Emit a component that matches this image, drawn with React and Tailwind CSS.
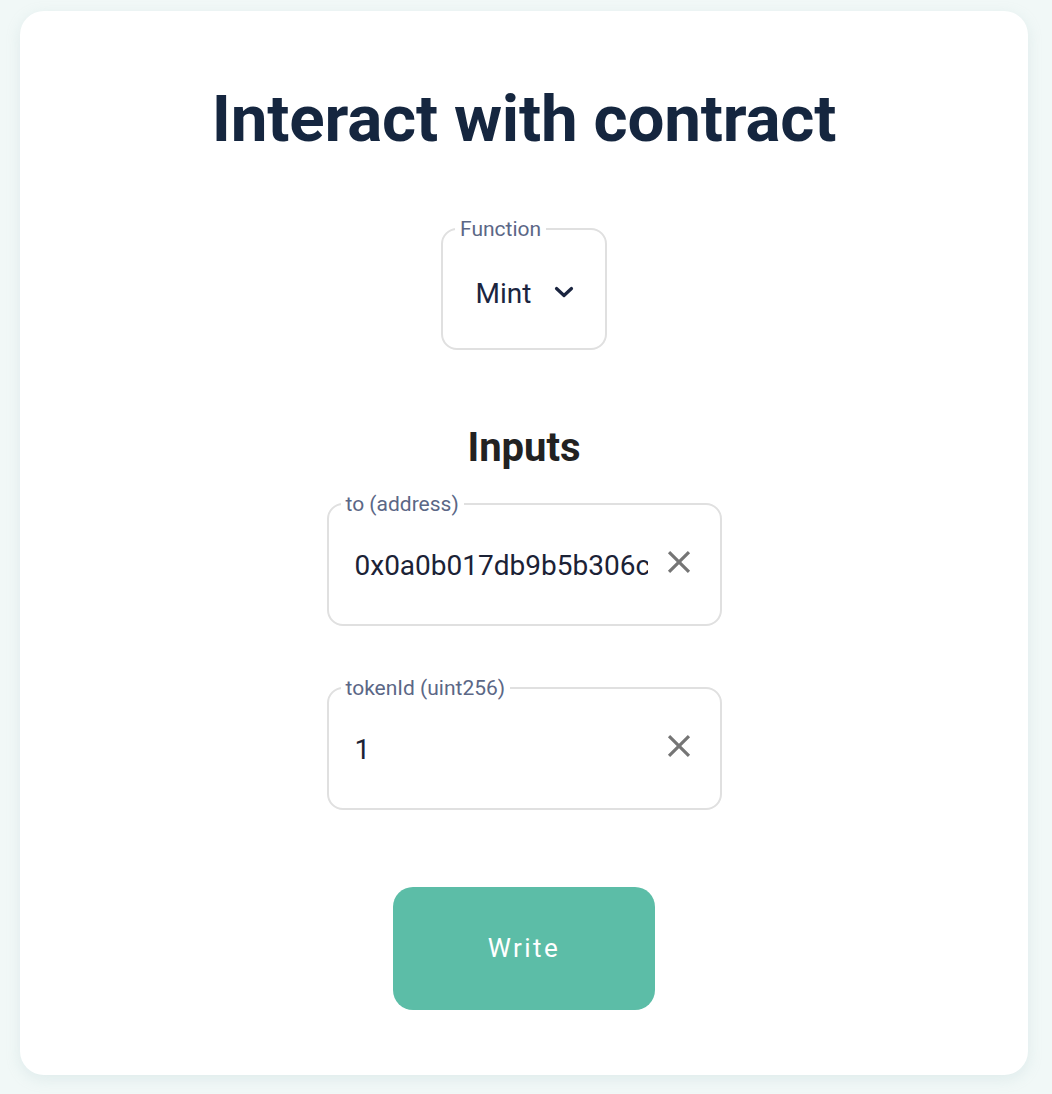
import { useState } from 'react';

function OutlinedField({ label, value, onClear, className = '' }) {
  return (
    <fieldset className={`min-w-0 border-2 border-[#e0e0e0] rounded-[16px] h-[134px] px-[18px] ${className}`}>
      <legend className="ml-[-6px] px-[5px] text-[21px] leading-[24px] text-[#5b6786]">{label}</legend>
      <div className="flex items-center h-[100px] pl-[8px] pr-[4px]">
        <div className="flex-1 min-w-0 overflow-hidden whitespace-nowrap text-[28px] text-[#1b2236]">{value}</div>
        <button type="button" onClick={onClear} className="ml-[12px] mt-[-8px] text-[#757575] shrink-0">
          <svg width="38" height="38" viewBox="0 0 24 24" fill="currentColor">
            <path d="M19 6.41 17.59 5 12 10.59 6.41 5 5 6.41 10.59 12 5 17.59 6.41 19 12 13.41 17.59 19 19 17.59 13.41 12z" />
          </svg>
        </button>
      </div>
    </fieldset>
  );
}

export default function App() {
  const [to, setTo] = useState('0x0a0b017db9b5b306c1f5ca0cbd8dd1ee3ac28a0e');
  const [tokenId, setTokenId] = useState('1');

  return (
    <div className="min-h-[1094px] bg-[#f1f8f7] pt-[11px] pl-[20px] pr-[24px] pb-[19px]" style={{ fontFamily: 'Roboto, "Liberation Sans", sans-serif' }}>
      <div className="bg-white rounded-[24px] h-[1064px] shadow-[0_4px_14px_rgba(170,200,205,0.25)] flex flex-col items-center pt-[75px]">
        <h1 className="text-[65.5px] leading-[66px] font-bold text-[#15263f] tracking-[-0.2px]">Interact with contract</h1>

        <fieldset className="mt-[64px] min-w-0 border-2 border-[#e0e0e0] rounded-[16px] w-[166px] h-[134px] px-[12px]">
          <legend className="px-[5px] text-[21px] leading-[26px] text-[#5b6786]">Function</legend>
          <div className="flex items-center justify-center h-[104px] gap-[23px] pl-[2px]">
            <span className="text-[28px] text-[#1b2540]">Mint</span>
            <svg width="20" height="14" viewBox="0 0 20 14" fill="none" stroke="#1b2540" strokeWidth="3.2" strokeLinecap="round" strokeLinejoin="round" className="mt-[-5px]">
              <path d="M2.5 3.5l7.5 7 7.5-7" />
            </svg>
          </div>
        </fieldset>

        <h2 className="mt-[74px] text-[40px] leading-[48px] font-bold text-[#222222]">Inputs</h2>

        <OutlinedField label="to (address)" value={to} onClear={() => setTo('')} className="mt-[20px] w-[395px]" />
        <OutlinedField label="tokenId (uint256)" value={tokenId} onClear={() => setTokenId('')} className="mt-[50px] w-[395px]" />

        <button type="button" className="mt-[77px] w-[262px] h-[123px] rounded-[20px] bg-[#5cbda7] text-white text-[26px] tracking-[2.5px]">
          Write
        </button>
      </div>
    </div>
  );
}
